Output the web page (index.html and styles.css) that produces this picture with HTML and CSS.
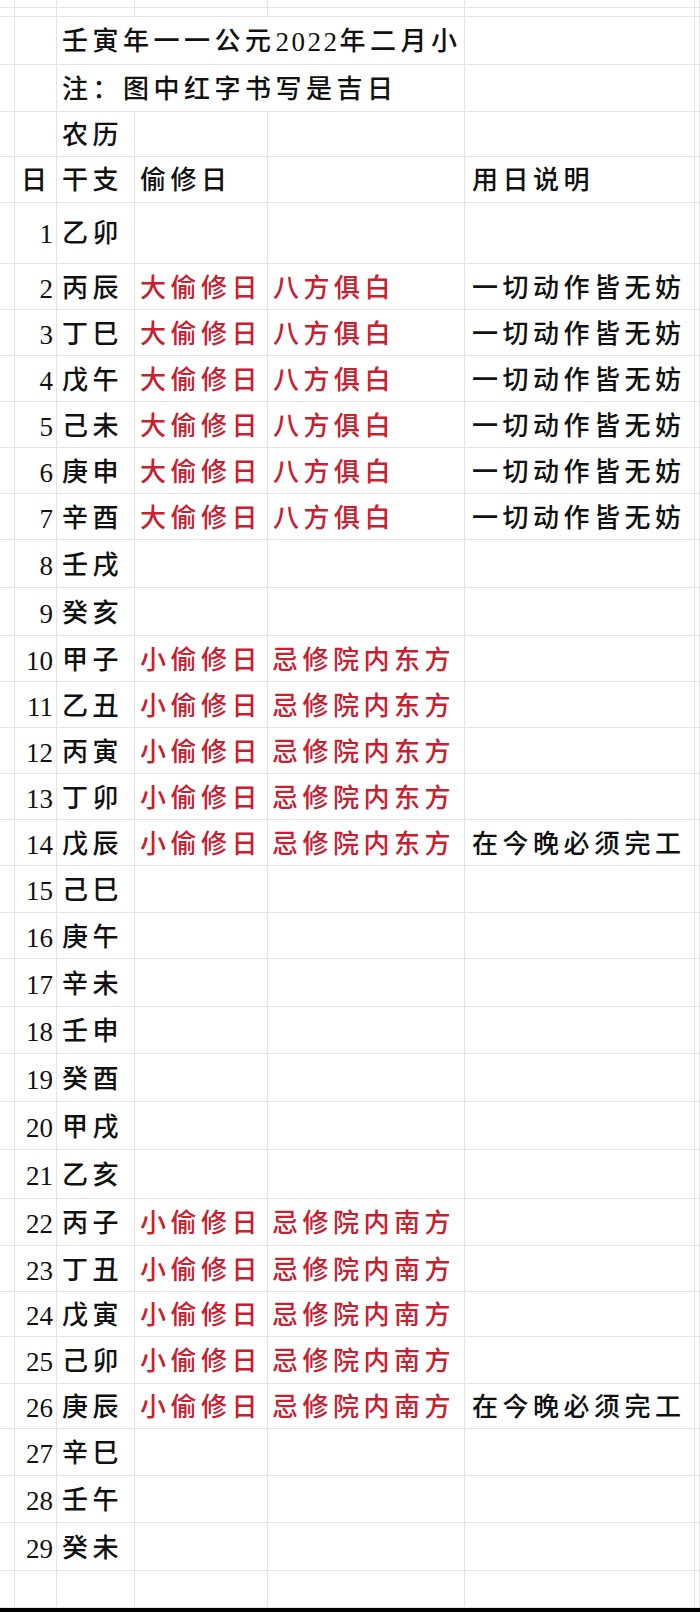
FILE: index.html
```html
<!DOCTYPE html>
<html lang="zh-CN">
<head>
<meta charset="utf-8">
<title>壬寅年二月</title>
<link rel="stylesheet" href="styles.css">
</head>
<body>
<div class="sheet">
  <div class="c"></div><div class="c"></div><div class="c"></div><div class="c"></div><div class="c"></div><div class="c"></div><div class="c"></div>
  <div class="c"></div><div class="c"></div><div class="c"></div><div class="c"></div><div class="c"></div><div class="c"></div><div class="c"></div>

  <div class="c"></div><div class="c"></div><div class="c t span3 head">壬寅年一一公元<span class="num">2022</span>年二月小</div><div class="c"></div><div class="c"></div>
  <div class="c"></div><div class="c"></div><div class="c t span3 head">注：图中红字书写是吉日</div><div class="c"></div><div class="c"></div>
  <div class="c"></div><div class="c"></div><div class="c t head">农历</div><div class="c"></div><div class="c"></div><div class="c"></div><div class="c"></div>
  <div class="c"></div><div class="c t day-head head">日</div><div class="c t head">干支</div><div class="c t head">偷修日</div><div class="c"></div><div class="c t head desc">用日说明</div><div class="c"></div>

  <div class="c"></div><div class="c n first">1</div><div class="c t first">乙卯</div><div class="c"></div><div class="c"></div><div class="c"></div><div class="c"></div>
  <div class="c"></div><div class="c n">2</div><div class="c t">丙辰</div><div class="c t red">大偷修日</div><div class="c t red">八方俱白</div><div class="c t desc">一切动作皆无妨</div><div class="c"></div>
  <div class="c"></div><div class="c n">3</div><div class="c t">丁巳</div><div class="c t red">大偷修日</div><div class="c t red">八方俱白</div><div class="c t desc">一切动作皆无妨</div><div class="c"></div>
  <div class="c"></div><div class="c n">4</div><div class="c t">戊午</div><div class="c t red">大偷修日</div><div class="c t red">八方俱白</div><div class="c t desc">一切动作皆无妨</div><div class="c"></div>
  <div class="c"></div><div class="c n">5</div><div class="c t">己未</div><div class="c t red">大偷修日</div><div class="c t red">八方俱白</div><div class="c t desc">一切动作皆无妨</div><div class="c"></div>
  <div class="c"></div><div class="c n">6</div><div class="c t">庚申</div><div class="c t red">大偷修日</div><div class="c t red">八方俱白</div><div class="c t desc">一切动作皆无妨</div><div class="c"></div>
  <div class="c"></div><div class="c n">7</div><div class="c t">辛酉</div><div class="c t red">大偷修日</div><div class="c t red">八方俱白</div><div class="c t desc">一切动作皆无妨</div><div class="c"></div>
  <div class="c"></div><div class="c n">8</div><div class="c t">壬戌</div><div class="c"></div><div class="c"></div><div class="c"></div><div class="c"></div>
  <div class="c"></div><div class="c n">9</div><div class="c t">癸亥</div><div class="c"></div><div class="c"></div><div class="c"></div><div class="c"></div>
  <div class="c"></div><div class="c n">10</div><div class="c t">甲子</div><div class="c t red">小偷修日</div><div class="c t red east">忌修院内东方</div><div class="c"></div><div class="c"></div>
  <div class="c"></div><div class="c n">11</div><div class="c t">乙丑</div><div class="c t red">小偷修日</div><div class="c t red east">忌修院内东方</div><div class="c"></div><div class="c"></div>
  <div class="c"></div><div class="c n">12</div><div class="c t">丙寅</div><div class="c t red">小偷修日</div><div class="c t red east">忌修院内东方</div><div class="c"></div><div class="c"></div>
  <div class="c"></div><div class="c n">13</div><div class="c t">丁卯</div><div class="c t red">小偷修日</div><div class="c t red east">忌修院内东方</div><div class="c"></div><div class="c"></div>
  <div class="c"></div><div class="c n">14</div><div class="c t">戊辰</div><div class="c t red">小偷修日</div><div class="c t red east">忌修院内东方</div><div class="c t desc">在今晚必须完工</div><div class="c"></div>
  <div class="c"></div><div class="c n">15</div><div class="c t">己巳</div><div class="c"></div><div class="c"></div><div class="c"></div><div class="c"></div>
  <div class="c"></div><div class="c n">16</div><div class="c t">庚午</div><div class="c"></div><div class="c"></div><div class="c"></div><div class="c"></div>
  <div class="c"></div><div class="c n">17</div><div class="c t">辛未</div><div class="c"></div><div class="c"></div><div class="c"></div><div class="c"></div>
  <div class="c"></div><div class="c n">18</div><div class="c t">壬申</div><div class="c"></div><div class="c"></div><div class="c"></div><div class="c"></div>
  <div class="c"></div><div class="c n">19</div><div class="c t">癸酉</div><div class="c"></div><div class="c"></div><div class="c"></div><div class="c"></div>
  <div class="c"></div><div class="c n">20</div><div class="c t">甲戌</div><div class="c"></div><div class="c"></div><div class="c"></div><div class="c"></div>
  <div class="c"></div><div class="c n">21</div><div class="c t">乙亥</div><div class="c"></div><div class="c"></div><div class="c"></div><div class="c"></div>
  <div class="c"></div><div class="c n">22</div><div class="c t">丙子</div><div class="c t red">小偷修日</div><div class="c t red east">忌修院内南方</div><div class="c"></div><div class="c"></div>
  <div class="c"></div><div class="c n">23</div><div class="c t">丁丑</div><div class="c t red">小偷修日</div><div class="c t red east">忌修院内南方</div><div class="c"></div><div class="c"></div>
  <div class="c"></div><div class="c n">24</div><div class="c t">戊寅</div><div class="c t red">小偷修日</div><div class="c t red east">忌修院内南方</div><div class="c"></div><div class="c"></div>
  <div class="c"></div><div class="c n">25</div><div class="c t">己卯</div><div class="c t red">小偷修日</div><div class="c t red east">忌修院内南方</div><div class="c"></div><div class="c"></div>
  <div class="c"></div><div class="c n">26</div><div class="c t">庚辰</div><div class="c t red">小偷修日</div><div class="c t red east">忌修院内南方</div><div class="c t desc">在今晚必须完工</div><div class="c"></div>
  <div class="c"></div><div class="c n">27</div><div class="c t">辛巳</div><div class="c"></div><div class="c"></div><div class="c"></div><div class="c"></div>
  <div class="c"></div><div class="c n">28</div><div class="c t">壬午</div><div class="c"></div><div class="c"></div><div class="c"></div><div class="c"></div>
  <div class="c"></div><div class="c n">29</div><div class="c t">癸未</div><div class="c"></div><div class="c"></div><div class="c"></div><div class="c"></div>
  <div class="c"></div><div class="c"></div><div class="c"></div><div class="c"></div><div class="c"></div><div class="c"></div><div class="c"></div>

  <div class="bar"></div>
</div>
</body>
</html>
```
FILE: styles.css
```css
html, body {
  margin: 0;
  padding: 0;
  background: #ffffff;
}

body {
  width: 700px;
  height: 1612px;
  overflow: hidden;
  font-family: "Liberation Serif", "Noto Sans CJK SC", serif;
  color: #111111;
}

.sheet {
  display: grid;
  width: 700px;
  grid-template-columns: 15px 42px 78px 133px 197px 230px 5px;
  grid-template-rows:
    8px 9px 48px 47px 45px 46px
    61px
    46px 46px 46px 46px 46px 46px 48px 48px 46px 46px 46px 46px 46px 47px
    46px 48px 47px 48px 48px 49px 47px 46px 45px 47px 45px 47px 47px 48px
    37px 4px;
}

.c {
  box-sizing: border-box;
  border-right: 1px solid #e4e4e4;
  border-bottom: 1px solid #e4e4e4;
  min-width: 0;
  overflow: visible;
  white-space: nowrap;
}

.t {
  display: flex;
  align-items: center;
  padding-top: 4px;
  padding-left: 5px;
  font-size: 26px;
  line-height: 26px;
  letter-spacing: 4.5px;
  font-weight: 500;
}

.head {
  padding-top: 3px;
}

.span3 {
  grid-column: span 3;
}

.num {
  letter-spacing: 2.5px;
  font-size: 27px;
  font-weight: 400;
}

.day-head {
  padding-left: 6px;
}

.n {
  display: flex;
  align-items: center;
  justify-content: flex-end;
  padding-top: 4px;
  padding-right: 3px;
  font-size: 27px;
  line-height: 26px;
  letter-spacing: 0;
}

.first {
  padding-top: 2px;
}

.red {
  color: #c8202f;
}

.east {
  padding-left: 4px;
}

.desc {
  padding-left: 7px;
}

.bar {
  grid-column: 1 / -1;
  background: #000000;
}
```
